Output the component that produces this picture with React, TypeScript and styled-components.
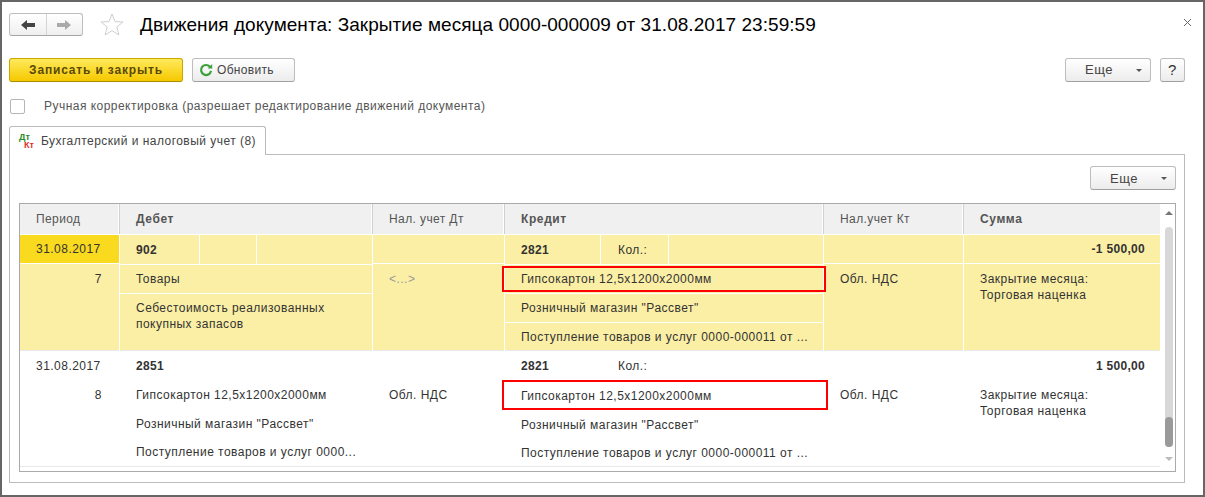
import styled, { createGlobalStyle } from 'styled-components';

const GlobalStyle = createGlobalStyle`
  html, body {
    margin: 0;
    padding: 0;
    background: #fff;
  }
  body {
    font-family: 'Liberation Sans', Arial, sans-serif;
    font-size: 12px;
    letter-spacing: 0.47px;
    color: #333;
  }
`;

const Window = styled.div`
  box-sizing: border-box;
  width: 1205px;
  height: 497px;
  border: 2px solid #666;
  padding: 11px 18px 0 7px;
  background: #fff;
`;

const TitleBar = styled.div`
  display: flex;
  align-items: center;
  height: 23px;
`;

const NavGroup = styled.div`
  display: flex;
  box-sizing: border-box;
  width: 74px;
  height: 23px;
  border: 1px solid #bdbdbd;
  border-bottom-color: #a5a5a5;
  border-radius: 3px;
  background: linear-gradient(#fff, #efefef);
`;

const NavButton = styled.div<{ $divided?: boolean }>`
  flex: 1;
  display: flex;
  align-items: center;
  justify-content: center;
  border-left: ${(p) => (p.$divided ? '1px solid #d4d4d4' : 'none')};
`;

const StarBox = styled.div`
  display: flex;
  margin-left: 17px;
`;

const Title = styled.h1`
  margin: 0 0 0 16px;
  font-size: 19px;
  font-weight: 400;
  letter-spacing: 0.05px;
  color: #000;
  white-space: nowrap;
`;

const CloseBox = styled.div`
  display: flex;
  margin-left: auto;
  margin-right: -7px;
  margin-top: -5px;
`;

const Toolbar = styled.div`
  display: flex;
  align-items: center;
  gap: 9px;
  height: 23px;
  margin-top: 22px;
`;

const Spacer = styled.div`
  flex: 1;
`;

const Button = styled.div<{ $width: number }>`
  display: flex;
  align-items: center;
  justify-content: center;
  box-sizing: border-box;
  position: relative;
  width: ${(p) => p.$width}px;
  height: 24px;
  border: 1px solid #bdbdbd;
  border-bottom-color: #a0a0a0;
  border-radius: 3px;
  background: linear-gradient(#fff, #ececec);
  color: #444;
`;

const PrimaryButton = styled(Button)`
  border-color: #c9a800;
  border-bottom-color: #a88d00;
  background: linear-gradient(#ffe95c, #f6c900);
  color: #5a4a05;
  font-weight: 700;
  letter-spacing: 0.83px;
`;

const RefreshButton = styled(Button)`
  justify-content: flex-start;
  padding-left: 6px;
  gap: 4px;
  letter-spacing: 0.3px;
`;

const MoreLabel = styled.span`
  font-size: 13px;
  margin-right: 18px;
`;

const MoreCaret = styled.span`
  position: absolute;
  right: 8px;
  top: 10px;
  border-left: 3px solid transparent;
  border-right: 3px solid transparent;
  border-top: 3px solid #555;
`;

const Help = styled.span`
  font-size: 15px;
  color: #333;
`;

const CheckRow = styled.div`
  display: flex;
  align-items: center;
  height: 16px;
  margin-top: 17px;
  margin-left: 1px;
`;

const CheckBox = styled.div`
  box-sizing: border-box;
  width: 15px;
  height: 15px;
  border: 1px solid #b5b5b5;
  border-radius: 2px;
  background: #fff;
`;

const CheckLabel = styled.span`
  margin-left: 19px;
  color: #555;
`;

const TabBar = styled.div`
  display: flex;
  margin-top: 12px;
`;

const Tab = styled.div`
  box-sizing: border-box;
  display: flex;
  align-items: center;
  gap: 5px;
  width: 257px;
  height: 29px;
  margin-bottom: -1px;
  padding-left: 9px;
  border: 1px solid #bbb;
  border-bottom: none;
  border-radius: 3px 3px 0 0;
  background: #fff;
  position: relative;
  color: #444;
`;

const DtKt = styled.span`
  display: flex;
  flex-direction: column;
  font-size: 9px;
  font-weight: 700;
  line-height: 8px;
  letter-spacing: 0;
  width: 17px;
`;

const Dt = styled.span`
  color: #2a8a2a;
`;

const Kt = styled.span`
  color: #e03030;
  margin-left: 5px;
`;

const Panel = styled.div`
  box-sizing: border-box;
  height: 329px;
  border: 1px solid #bbb;
  padding: 11px 8px 0 9px;
`;

const PanelBar = styled.div`
  display: flex;
  justify-content: flex-end;
`;

const Table = styled.div`
  box-sizing: border-box;
  display: flex;
  height: 269px;
  margin-top: 13px;
  border: 1px solid #aaa;
`;

const TableMain = styled.div`
  width: 1140px;
`;

const COLUMNS = '100px 253px 132px 319px 140px 196px';

const HeaderRow = styled.div`
  display: grid;
  grid-template-columns: ${COLUMNS};
  height: 30px;
  margin-bottom: 1px;
  background: #f0f0f0;
`;

const HeaderCell = styled.div<{ $bold?: boolean }>`
  box-sizing: border-box;
  display: flex;
  align-items: center;
  padding-left: 16px;
  border-right: 1px solid #d0d0d0;
  box-shadow: inset -1px 0 0 #fff;
  color: #555;
  font-weight: ${(p) => (p.$bold ? 700 : 400)};
  letter-spacing: ${(p) => (p.$bold ? '0.6px' : '0.4px')};
  &:last-child {
    border-right: none;
    box-shadow: none;
  }
`;

const Row = styled.div<{ $active?: boolean }>`
  display: grid;
  grid-template-columns: ${COLUMNS};
  height: 115px;
  background: ${(p) => (p.$active ? '#fbefa5' : '#fff')};
  border-bottom: 1px solid #e8e8e8;
  --rule: ${(p) => (p.$active ? '#fff' : 'transparent')};
`;

const Column = styled.div`
  box-sizing: border-box;
  display: flex;
  flex-direction: column;
  border-right: 1px solid var(--rule);
  &:last-child {
    border-right: none;
  }
`;

const Line = styled.div<{ $size?: number; $right?: boolean; $selected?: boolean; $plain?: boolean }>`
  box-sizing: border-box;
  position: relative;
  display: flex;
  align-items: center;
  justify-content: ${(p) => (p.$right ? 'flex-end' : 'flex-start')};
  height: ${(p) => p.$size ?? 29}px;
  padding: 0 ${(p) => (p.$right ? '15px' : '16px')};
  border-bottom: ${(p) => (p.$plain ? 'none' : '1px solid var(--rule)')};
  background: ${(p) => (p.$selected ? '#fada1f' : 'transparent')};
  white-space: nowrap;
`;

const NumberLine = styled(Line)`
  padding-right: 17px;
`;

const RedFrame = styled.span<{ $top: number; $bottom: number; $right: number }>`
  position: absolute;
  left: -3px;
  right: ${(p) => p.$right}px;
  top: ${(p) => p.$top}px;
  bottom: ${(p) => p.$bottom}px;
  border: 2px solid #f00;
`;

const WrapText = styled.div`
  align-self: flex-start;
  padding-top: 6px;
  line-height: 16px;
  white-space: normal;
`;

const NoteText = styled.div`
  padding: 7px 16px 0;
  line-height: 16px;
`;

const Muted = styled.span`
  color: #999;
`;

const Strong = styled.span`
  font-weight: 700;
  letter-spacing: 0.3px;
`;

const Split = styled.div<{ $template: string }>`
  display: grid;
  grid-template-columns: ${(p) => p.$template};
  height: 29px;
  border-bottom: 1px solid var(--rule);
`;

const SplitCell = styled.div<{ $pad?: number }>`
  display: flex;
  align-items: center;
  padding-left: ${(p) => p.$pad ?? 16}px;
  border-right: 1px solid var(--rule);
  &:last-child {
    border-right: none;
  }
`;

const Scroll = styled.div`
  flex: 1;
  display: flex;
  flex-direction: column;
  align-items: center;
  padding-left: 2px;
`;

const ArrowUp = styled.div`
  margin-top: 7px;
  border-left: 4px solid transparent;
  border-right: 4px solid transparent;
  border-bottom: 4px solid #777;
`;

const ArrowDown = styled.div`
  margin-top: 10px;
  border-left: 4px solid transparent;
  border-right: 4px solid transparent;
  border-top: 4px solid #bbb;
`;

const Track = styled.div`
  display: flex;
  flex-direction: column;
  justify-content: flex-end;
  width: 8px;
  height: 220px;
  margin-top: 12px;
  border-radius: 4px;
  background: #d8d8d8;
`;

const Thumb = styled.div`
  height: 30px;
  border-radius: 4px;
  background: #9a9a9a;
`;

const ArrowIcon = ({ color, flip }: { color: string; flip?: boolean }) => (
  <svg width="14" height="10" viewBox="0 0 14 10" style={flip ? { transform: 'scaleX(-1)' } : undefined}>
    <path d="M0 5 L6 0 V3 H14 V7 H6 V10 Z" fill={color} />
  </svg>
);

const StarIcon = () => (
  <svg width="24" height="23" viewBox="0 0 24 23">
    <path
      d="M12 1 L15 8.6 L23 9 L16.8 14.1 L18.9 22 L12 17.6 L5.1 22 L7.2 14.1 L1 9 L9 8.6 Z"
      fill="#fff"
      stroke="#cfcfcf"
    />
  </svg>
);

const CloseIcon = () => (
  <svg width="9" height="9" viewBox="0 0 9 9">
    <path d="M1 1 L8 8 M8 1 L1 8" stroke="#666" fill="none" />
  </svg>
);

const RefreshIcon = () => (
  <svg width="14" height="14" viewBox="0 0 14 14">
    <path d="M11.2 4.2 A5 5 0 1 0 12 7.8" stroke="#3aa13a" strokeWidth="2.2" fill="none" />
    <path d="M8.6 5.6 L13.2 5.6 L13.2 1 Z" fill="#3aa13a" />
  </svg>
);

const More = ({ width }: { width: number }) => (
  <Button $width={width}>
    <MoreLabel>Еще</MoreLabel>
    <MoreCaret />
  </Button>
);

const NOTE = ['Закрытие месяца:', 'Торговая наценка'];
const PRODUCT = 'Гипсокартон 12,5x1200x2000мм';
const SHOP = 'Розничный магазин "Рассвет"';

const Note = () => (
  <NoteText>
    {NOTE.map((line) => (
      <div key={line}>{line}</div>
    ))}
  </NoteText>
);

const ActiveRow = () => (
  <Row $active>
    <Column>
      <Line $selected>31.08.2017</Line>
      <NumberLine $right $plain>7</NumberLine>
    </Column>
    <Column>
      <Split $template="80px 57px 1fr">
        <SplitCell><Strong>902</Strong></SplitCell>
        <SplitCell />
        <SplitCell />
      </Split>
      <Line>Товары</Line>
      <Line $size={57} $plain>
        <WrapText>Себестоимость реализованных<br />покупных запасов</WrapText>
      </Line>
    </Column>
    <Column>
      <Line />
      <Line $plain><Muted>&lt;...&gt;</Muted></Line>
    </Column>
    <Column>
      <Split $template="96px 68px 1fr">
        <SplitCell><Strong>2821</Strong></SplitCell>
        <SplitCell $pad={17}>Кол.:</SplitCell>
        <SplitCell />
      </Split>
      <Line>
        {PRODUCT}
        <RedFrame $top={1} $bottom={1} $right={-3} />
      </Line>
      <Line>{SHOP}</Line>
      <Line $size={28} $plain>Поступление товаров и услуг 0000-000011 от ...</Line>
    </Column>
    <Column>
      <Line />
      <Line $plain>Обл. НДС</Line>
    </Column>
    <Column>
      <Line $right><Strong>-1 500,00</Strong></Line>
      <Note />
    </Column>
  </Row>
);

const PlainRow = () => (
  <Row>
    <Column>
      <Line $plain>31.08.2017</Line>
      <NumberLine $right $plain>8</NumberLine>
    </Column>
    <Column>
      <Line $plain><Strong>2851</Strong></Line>
      <Line $plain>{PRODUCT}</Line>
      <Line $plain>{SHOP}</Line>
      <Line $size={28} $plain>Поступление товаров и услуг 0000...</Line>
    </Column>
    <Column>
      <Line $plain />
      <Line $plain>Обл. НДС</Line>
    </Column>
    <Column>
      <Split $template="96px 1fr">
        <SplitCell><Strong>2821</Strong></SplitCell>
        <SplitCell $pad={17}>Кол.:</SplitCell>
      </Split>
      <Line $plain>
        {PRODUCT}
        <RedFrame $top={-1} $bottom={0} $right={-5} />
      </Line>
      <Line $plain>{SHOP}</Line>
      <Line $size={28} $plain>Поступление товаров и услуг 0000-000011 от ...</Line>
    </Column>
    <Column>
      <Line $plain />
      <Line $plain>Обл. НДС</Line>
    </Column>
    <Column>
      <Line $right $plain><Strong>1 500,00</Strong></Line>
      <Note />
    </Column>
  </Row>
);

const App = () => {
  return (
    <Window>
      <GlobalStyle />
      <TitleBar>
        <NavGroup>
          <NavButton><ArrowIcon color="#444" /></NavButton>
          <NavButton $divided><ArrowIcon color="#aaa" flip /></NavButton>
        </NavGroup>
        <StarBox><StarIcon /></StarBox>
        <Title>Движения документа: Закрытие месяца 0000-000009 от 31.08.2017 23:59:59</Title>
        <CloseBox><CloseIcon /></CloseBox>
      </TitleBar>
      <Toolbar>
        <PrimaryButton $width={174}>Записать и закрыть</PrimaryButton>
        <RefreshButton $width={103}>
          <RefreshIcon />
          Обновить
        </RefreshButton>
        <Spacer />
        <More width={86} />
        <Button $width={25}><Help>?</Help></Button>
      </Toolbar>
      <CheckRow>
        <CheckBox />
        <CheckLabel>Ручная корректировка (разрешает редактирование движений документа)</CheckLabel>
      </CheckRow>
      <TabBar>
        <Tab>
          <DtKt>
            <Dt>Дт</Dt>
            <Kt>Кт</Kt>
          </DtKt>
          Бухгалтерский и налоговый учет (8)
        </Tab>
      </TabBar>
      <Panel>
        <PanelBar>
          <More width={86} />
        </PanelBar>
        <Table>
          <TableMain>
            <HeaderRow>
              <HeaderCell>Период</HeaderCell>
              <HeaderCell $bold>Дебет</HeaderCell>
              <HeaderCell>Нал. учет Дт</HeaderCell>
              <HeaderCell $bold>Кредит</HeaderCell>
              <HeaderCell>Нал.учет Кт</HeaderCell>
              <HeaderCell $bold>Сумма</HeaderCell>
            </HeaderRow>
            <ActiveRow />
            <PlainRow />
          </TableMain>
          <Scroll>
            <ArrowUp />
            <Track>
              <Thumb />
            </Track>
            <ArrowDown />
          </Scroll>
        </Table>
      </Panel>
    </Window>
  );
};

export default App;
